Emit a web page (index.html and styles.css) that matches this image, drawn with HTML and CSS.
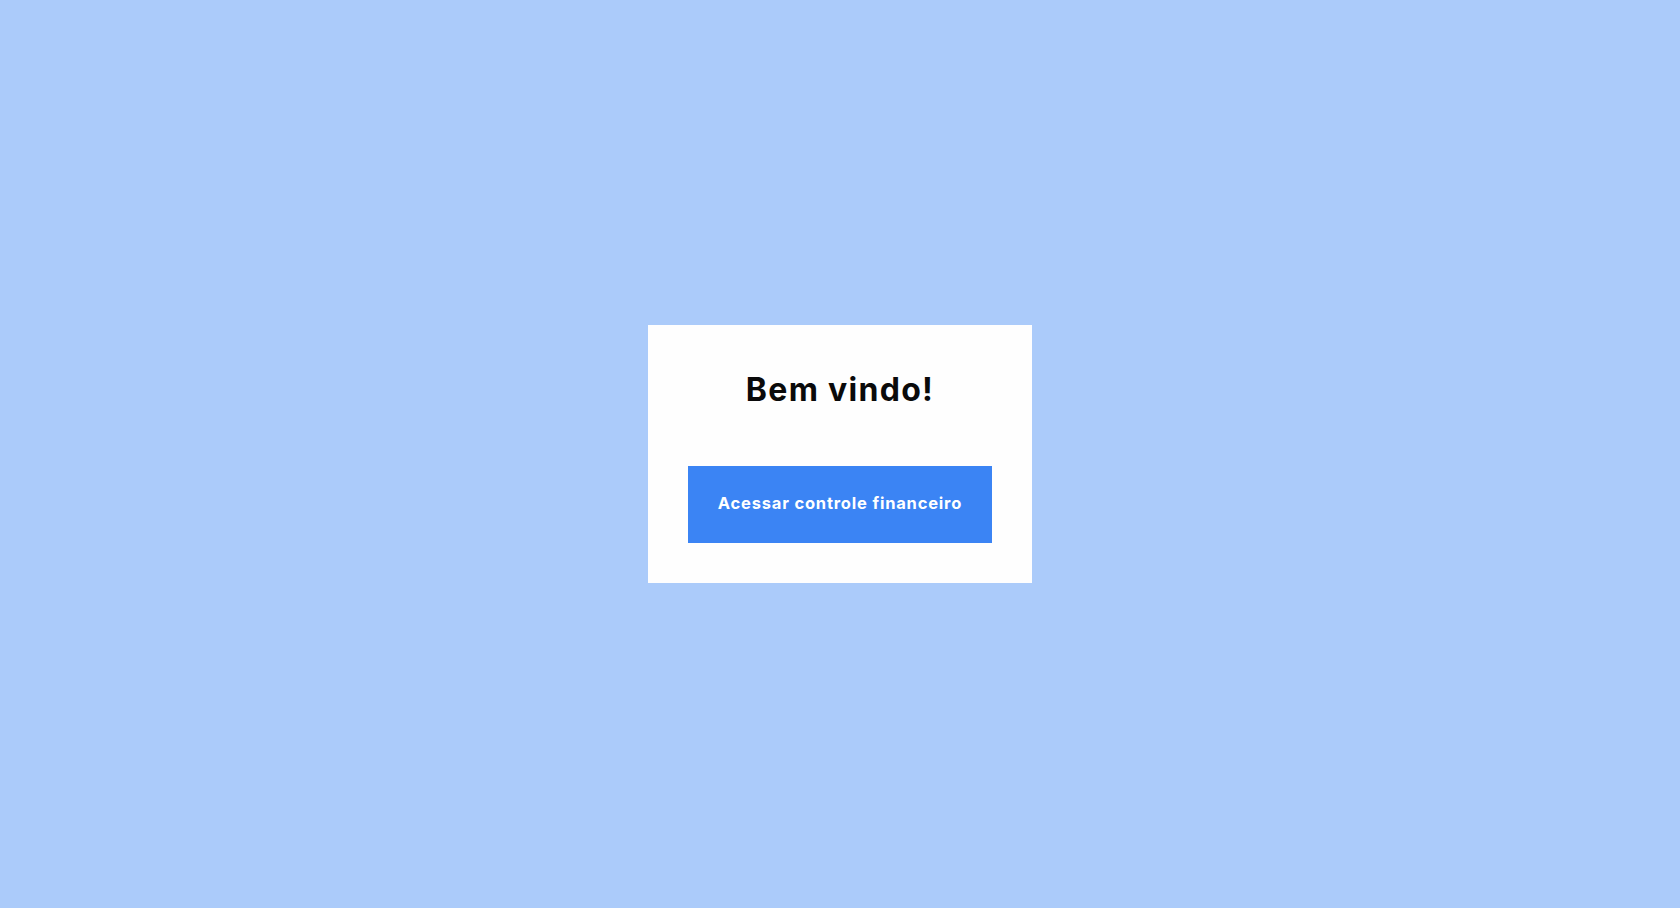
FILE: index.html
```html
<!DOCTYPE html>
<html lang="pt-BR">
<head>
<meta charset="utf-8">
<title>Bem vindo</title>
<link rel="stylesheet" href="styles.css">
</head>
<body>
<main class="page">
  <section class="card">
    <h1 class="title">Bem vindo!</h1>
    <button class="btn" type="button">Acessar controle financeiro</button>
  </section>
</main>
</body>
</html>
```
FILE: styles.css
```css
html, body {
  margin: 0;
  padding: 0;
  height: 100%;
}
body {
  background: #abcbfa;
  font-family: Inter, "Open Sans", "Liberation Sans", sans-serif;
}
.page {
  height: 100%;
  display: flex;
  align-items: center;
  justify-content: center;
}
.card {
  background: #fefefe;
  width: 384px;
  box-sizing: border-box;
  padding: 45px 40px 40px;
  display: flex;
  flex-direction: column;
  align-items: center;
}
.title {
  margin: 0 0 56px;
  font-size: 32px;
  line-height: 40px;
  font-weight: 700;
  letter-spacing: 1.3px;
  color: #0a0a0a;
}
.btn {
  width: 304px;
  height: 77px;
  padding: 0 0 3px;
  border: 0;
  background: #3b84f4;
  color: #ffffff;
  font-family: inherit;
  font-size: 16.5px;
  font-weight: 700;
  letter-spacing: 0.8px;
  cursor: pointer;
}
```
